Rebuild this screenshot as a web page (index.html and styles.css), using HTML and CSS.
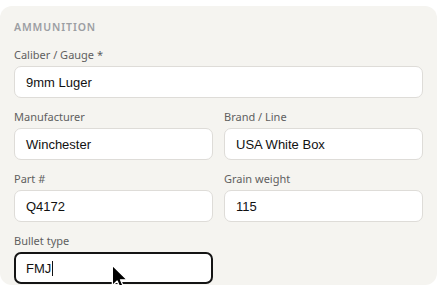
FILE: index.html
```html
<!DOCTYPE html>
<html>
<head>
<meta charset="utf-8">
<link rel="stylesheet" href="styles.css">
</head>
<body>
<div class="card">
  <div class="heading">AMMUNITION</div>
  <div class="field">
    <label class="label">Caliber / Gauge *</label>
    <div class="input">9mm Luger</div>
  </div>
  <div class="row">
    <div class="field">
      <label class="label">Manufacturer</label>
      <div class="input">Winchester</div>
    </div>
    <div class="field">
      <label class="label">Brand / Line</label>
      <div class="input">USA White Box</div>
    </div>
  </div>
  <div class="row">
    <div class="field">
      <label class="label">Part #</label>
      <div class="input">Q4172</div>
    </div>
    <div class="field">
      <label class="label">Grain weight</label>
      <div class="input">115</div>
    </div>
  </div>
  <div class="row">
    <div class="field">
      <label class="label">Bullet type</label>
      <div class="input focused">FMJ<span class="caret"></span></div>
    </div>
    <div></div>
  </div>
</div>
<svg class="pointer" width="18" height="28" viewBox="0 0 14 22">
  <path d="M1 1 L1 17 L4.8 13.4 L7.4 19.6 L10 18.5 L7.4 12.4 L12.6 12.4 Z" fill="#000" stroke="#fff" stroke-width="1" stroke-linejoin="round"/>
</svg>
</body>
</html>
```
FILE: styles.css
```css
html, body {
  margin: 0;
  padding: 0;
  background: #ffffff;
  overflow: hidden;
}
body {
  width: 437px;
  height: 285px;
  position: relative;
}
.card {
  margin-top: 6px;
  background: #f5f4f0;
  border-radius: 12px;
  padding: 14px 14px 0 14px;
  display: flex;
  flex-direction: column;
  gap: 12px;
  box-sizing: border-box;
  width: 437px;
  height: 279px;
  overflow: hidden;
}
.heading {
  font-family: "Noto Sans", "Open Sans", sans-serif;
  font-size: 10.5px;
  font-weight: 600;
  letter-spacing: 0.9px;
  color: #9c9ea3;
  line-height: 14px;
  margin-bottom: 2px;
}
.row {
  display: grid;
  grid-template-columns: 1fr 1fr;
  column-gap: 11px;
}
.field {
  display: flex;
  flex-direction: column;
  gap: 4px;
}
.label {
  font-family: "Noto Sans", "Open Sans", sans-serif;
  font-size: 11px;
  line-height: 14px;
  color: #5f5f5f;
}
.input {
  height: 32px;
  box-sizing: border-box;
  background: #ffffff;
  border: 1px solid #dedcd8;
  border-radius: 7px;
  padding: 0 11px;
  font-family: "Liberation Sans", Arial, sans-serif;
  font-size: 13px;
  color: #111111;
  display: flex;
  align-items: center;
}
.input.focused {
  border: 2px solid #141414;
  padding: 0 10px;
  flex-shrink: 0;
}
.caret {
  display: inline-block;
  width: 1px;
  height: 15px;
  background: #111;
  margin-left: 1px;
}
.pointer {
  position: absolute;
  left: 111px;
  top: 264px;
}
```
